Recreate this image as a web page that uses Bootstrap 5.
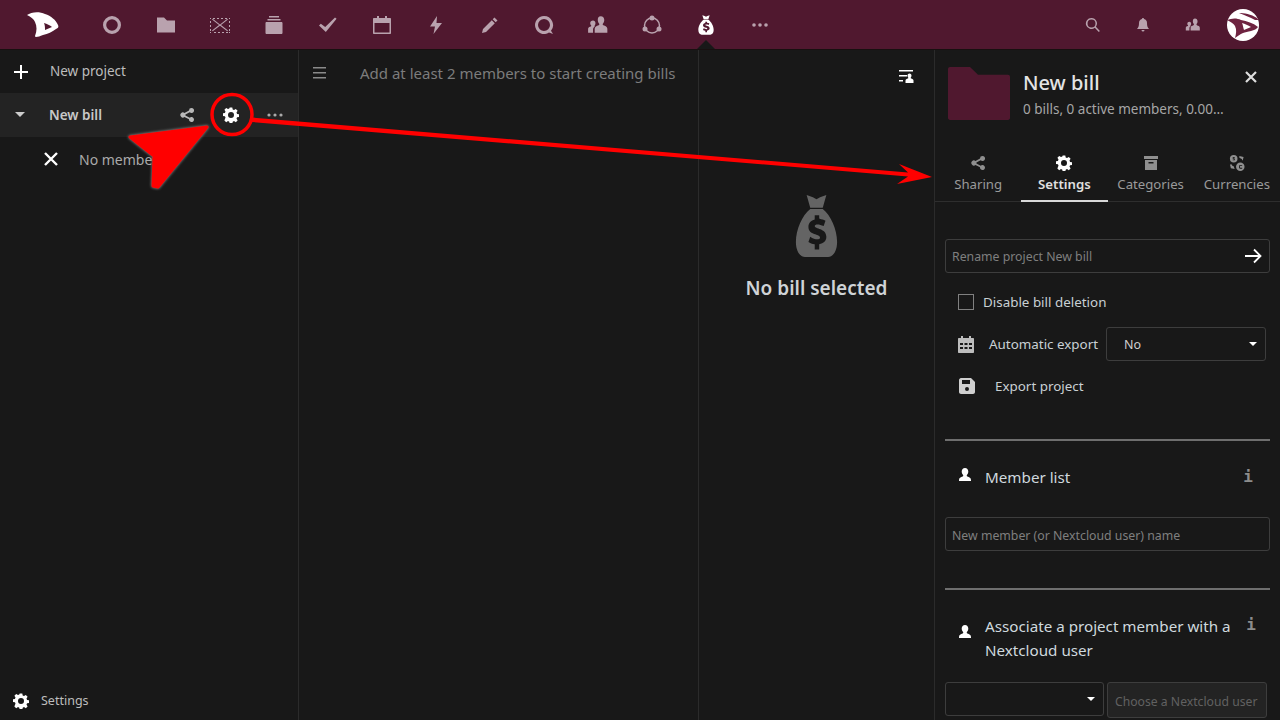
<!DOCTYPE html>
<html lang="en">
<head>
  <meta charset="UTF-8" />
  <title>Cospend - New bill</title>
  <link href="https://cdn.jsdelivr.net/npm/bootstrap@5.3.3/dist/css/bootstrap.min.css" rel="stylesheet">
  <style>
    html, body { height: 720px; overflow: hidden; }
    body { background: #181818; color: #d8d8d8; font-family: "Noto Sans", "Open Sans", sans-serif; font-size: 13px; }
    .topbar { height: 50px; background: #50182f; border-bottom: 1px solid #181010; }
    .app-logo { width: 85px; padding-left: 25px; }
    .top-item { width: 54px; height: 49px; position: relative; }
    .top-item svg { fill: #b9a2ae; }
    .top-item.on svg { fill: #fff; }
    .top-item.on::after { content: ""; position: absolute; left: 18px; bottom: 0; border: 9px solid transparent; border-top: 0; border-bottom-color: #181818; }
    .right-item { width: 50px; height: 49px; }
    .right-item svg { fill: #b9a2ae; }
    .avatar-round { width: 32px; height: 32px; border-radius: 50%; background: #fff; margin: 0 21px 0 9px; overflow: hidden; }
    .workspace { height: 670px; }
    .side-col { width: 299px; border-right: 1px solid #2b2b2b; }
    .side-row { height: 44px; }
    .new-row { height: 43px; padding-left: 14px; color: #bdbdbd; font-size: 13.5px; }
    .new-row span { margin-left: 22px; }
    .bill-row { background: #232323; font-weight: 600; font-size: 13.5px; color: #c8c8c8; padding-left: 15px; }
    .bill-row .bill-name { margin-left: 24px; width: 130px; }
    .gear-gap, .dots-gap { margin-left: 28px; }
    .member-row { padding-left: 44px; color: #aaa; font-size: 14px; }
    .member-row span { margin-left: 21px; }
    .side-foot { height: 38px; padding-left: 13px; color: #bdbdbd; font-size: 12.5px; }
    .side-foot span { margin-left: 12px; }
    .list-col { width: 400px; border-right: 1px solid #2b2b2b; }
    .list-head { height: 46px; padding-left: 14px; color: #7c7c7c; font-size: 15px; }
    .list-head span { margin-left: 34px; }
    .detail-col { width: 236px; border-right: 1px solid #2b2b2b; }
    .filter-btn { height: 56px; padding: 20px 20px 0 0; }
    .empty-box { margin-top: 88px; }
    .empty-box p { font-size: 19px; font-weight: 600; color: #cfd3d6; margin: 17px 0 0; line-height: 26px; }
    .panel-col { width: 345px; padding: 0 10px; overflow: hidden; }
    .panel-top { height: 96px; padding: 17px 0 0 3px; position: relative; }
    .panel-top h5 { font-size: 20px; font-weight: 500; color: #e4e4e4; margin: 4px 0 4px; }
    .panel-top p { font-size: 13.5px; color: #a6a6a6; margin: 0; white-space: nowrap; }
    .panel-close { position: absolute; right: 13px; top: 21px; }
    .title-gap { margin-left: 13px; }
    .tab-strip { margin: 0 -10px 37px; height: 56px; border-bottom: 1px solid #2e2e2e; }
    .tab-item { width: 86.5px; height: 56px; color: #9a9a9a; font-size: 13.2px; padding-top: 9px; line-height: 19px; }
    .tab-item svg { fill: #8f8f8f; display: block; margin: 0 auto 4px; }
    .tab-item.on { color: #e0e0e0; font-weight: 600; border-bottom: 2px solid #d8d8d8; }
    .tab-item.on svg { fill: #fff; }
    .field-box { height: 34px; border: 1px solid #3d3d3d; border-radius: 3px; background: transparent; font-size: 12.3px; color: #7f7f7f; padding: 0 6px; }
    .field-box.wide { width: 325px; }
    .field-box.wide.rename-box { padding-right: 7px; }
    .rename-box span { margin-top: 2px; }
    .field-box.wide.member-box { padding-top: 4px; }
    .opt-row { padding-left: 13px; font-size: 13.4px; color: #c9d0d4; height: 42px; }
    .tick-box { width: 16px; height: 16px; border: 1px solid #808080; margin-right: 9px; }
    .cal-ico { margin-right: 15px; }
    .export-ico { margin-left: 1px; margin-right: 20px; }
    .select-box { width: 160px; height: 34px; margin-left: 8px; border: 1px solid #3d3d3d; border-radius: 3px; padding: 2px 17px 0; font-size: 12.5px; color: #cfcfcf; position: relative; }
    .caret-down { position: absolute; right: 8px; top: 14px; border: 4px solid transparent; border-bottom: 0; border-top-color: #fff; }
    .rule-line { height: 2px; background: #6e6e6e; margin-top: 32px; }
    .rule-line.rule-two { margin-top: 37px; }
    .sect-title { font-size: 15.2px; color: #cfd9de; line-height: 24px; }
    .sect-one { height: 76px; padding: 0 17px 4px 12px; }
    .sect-one svg { margin-right: 12px; margin-bottom: 4px; }
    .info-mark { font-family: "DejaVu Sans Mono", monospace; font-weight: 700; font-size: 16px; color: #8c8c8c; }
    .sect-two { height: 92px; padding: 4px 14px 0 12px; }
    .sect-two svg { margin-right: 12px; margin-bottom: 12px; }
    .info-two { margin: 19px 0 0 8px; }
    .pick-one { width: 159px; position: relative; }
    .pick-two { width: 160px; height: 36px; margin-left: 3px; background: #232323; color: #616161; font-size: 12.2px; padding: 4px 7px 0; display: flex; align-items: center; white-space: nowrap; }
    .mark-layer { position: absolute; left: 0; top: 0; width: 1280px; height: 720px; pointer-events: none; }
    .fat-arrow { filter: drop-shadow(0 0 1.5px #999); }
  </style>
</head>
<body>

<svg width="0" height="0" class="position-absolute">
  <defs>
    <symbol id="gear" viewBox="0 0 16 16"><path fill-rule="evenodd" d="M6.700.5h2.600l.4 2 1.300.6 1.800-1.100 1.800 1.800-1.100 1.800.6 1.300 2 .4v2.600l-2 .4-.6 1.300 1.100 1.800-1.800 1.800-1.800-1.100-1.300.6-.4 2H6.700l-.4-2-1.300-.6-1.800 1.100-1.800-1.800L2.500 10.600l-.6-1.300-2-.4V6.300l2-.4.6-1.300L1.400 2.800l1.800-1.800L5 2.100l1.300-.6zM8 5a3 3 0 1 0 0 6 3 3 0 0 0 0-6z"/></symbol>
    <symbol id="share" viewBox="0 0 16 16"><path d="M12.500 1a2.500 2.500 0 1 1-1.800 4.200L6.400 7.400a2.500 2.500 0 0 1 0 1.200l4.300 2.200a2.500 2.500 0 1 1-.7 1.400L5.500 9.900a2.500 2.500 0 1 1 0-3.800L10 3.600A2.500 2.500 0 0 1 12.500 1z"/></symbol>
    <symbol id="person" viewBox="0 0 16 16"><path d="M8 1c2 0 3.300 1.500 3.300 3.600 0 1.400-.6 2.700-1.400 3.500-.3.500-.2 1.200.5 1.500 1.800.7 3.600 1.300 3.600 3.400V14H2v-1c0-2.100 1.800-2.700 3.600-3.400.7-.3.800-1 .5-1.500C5.300 7.300 4.700 6 4.700 4.600 4.700 2.500 6 1 8 1z"/></symbol>
    <symbol id="people" viewBox="0 0 20 20"><path d="M12.500 2c2 0 3.200 1.500 3.200 3.500 0 1.300-.5 2.500-1.300 3.300-.3.500-.1 1.100.5 1.400 1.700.6 3.600 1.200 3.600 3.300V17H7v-3.500c0-2.100 1.900-2.700 3.600-3.300.6-.3.800-.9.500-1.400-.8-.8-1.300-2-1.300-3.300C9.800 3.500 10.500 2 12.500 2zM5.500 6c1.200 0 2.200 1 2.200 2.500 0 .9-.4 1.700-.9 2.300-.2.400 0 .6.300.8-1.200.6-1.600 1.500-1.600 2.400V17H1v-3.500c0-1.500 1.300-1.900 2.500-2.200.4-.2.500-.6.300-.9-.6-.5-.9-1.200-.9-2C2.900 7 4 6 5.500 6z"/></symbol>
    <symbol id="bag" viewBox="0 0 48 60"><path fill-rule="evenodd" d="M13 1l7 2 4 2 4-2 7-2-4 12H17zM17 14h14c9 6 16 19 16 31 0 9-5 14-10 14H11C6 59 1 54 1 45c0-12 7-25 16-31zM22 20v4c-4 1-7 3-7 7 0 8 13 6 13 10 0 2-6 2-11-1l-2 5c2 1 4 2 7 2v5h5v-5c5-1 8-3 8-7 0-8-13-7-13-10 0-2 5-2 10 0l2-5c-2-1-4-1-7-2v-3z"/></symbol>
  </defs>
</svg>

<!-- top navigation -->
<header class="topbar d-flex align-items-center">
  <div class="app-logo">
    <svg width="34" height="28" viewBox="0 0 34 28" class="d-block"><path fill="#fff" fill-rule="evenodd" d="M2 4C6 1 14 0 20 3c6 2 11 6 13 11 1 2 0 3-2 4-4 3-8 5-13 6-3 1-5 2-7 2-1 0-1-1-1-1 2-5 2-10 0-14C9 8 6 6 2 4zM19 12c1 2 1 5 1 7l7-3c-2-2-5-3-8-4z"/></svg>
  </div>
  <div class="top-item d-flex align-items-center justify-content-center">
    <svg width="20" height="20" viewBox="0 0 20 20"><path fill-rule="evenodd" d="M10 1a9 9 0 1 1 0 18 9 9 0 0 1 0-18zm0 3.200a5.800 5.800 0 1 0 0 11.600 5.800 5.800 0 0 0 0-11.600z"/></svg>
  </div>
  <div class="top-item d-flex align-items-center justify-content-center">
    <svg width="20" height="20" viewBox="0 0 20 20"><path d="M1 2.500h7l3 3h8v12H1z"/></svg>
  </div>
  <div class="top-item d-flex align-items-center justify-content-center">
    <svg width="22" height="20" viewBox="0 0 22 20"><path d="M1 3h1v1H1zm3 0h2v1H4zm4 0h2v1H8zm4 0h2v1h-2zm4 0h2v1h-2zm4 0h1v1h-1zM1 6h1v2H1zm0 4h1v2H1zm0 4h1v2H1zm19-8h1v2h-1zm0 4h1v2h-1zm0 4h1v2h-1zM1 17h1v1H1zm4 0h2v1H5zm4 0h2v1H9zm4 0h2v1h-2zm4 0h2v1h-2zm3 0h1v1h-1z"/><path d="M3 4.500l.7-.7L11 9.500l7.300-5.700.7.7L12 10l7 5.500-.7.7L11 10.700l-7.300 5.500-.7-.7L10 10z"/></svg>
  </div>
  <div class="top-item d-flex align-items-center justify-content-center">
    <svg width="20" height="20" viewBox="0 0 20 20"><path d="M5 1h10v1.500H5zM3.500 4h13v1.500h-13zM2.500 7h15c.5 0 1 .5 1 1v10c0 .5-.5 1-1 1h-15c-.5 0-1-.5-1-1V8c0-.5.5-1 1-1z"/></svg>
  </div>
  <div class="top-item d-flex align-items-center justify-content-center">
    <svg width="20" height="20" viewBox="0 0 20 20"><path d="M7.800 17L1 10.500l1.800-1.700 4.400 3.200L17 2.500l1.600 1.300z"/></svg>
  </div>
  <div class="top-item d-flex align-items-center justify-content-center">
    <svg width="20" height="20" viewBox="0 0 20 20"><path fill-rule="evenodd" d="M5 1h2v2h6V1h2v2h3c.6 0 1 .4 1 1v14c0 .6-.4 1-1 1H2c-.6 0-1-.4-1-1V4c0-.6.4-1 1-1h3zM2.500 8v9.500h15V8z"/></svg>
  </div>
  <div class="top-item d-flex align-items-center justify-content-center">
    <svg width="20" height="20" viewBox="0 0 20 20"><path d="M11 1L4 11.500h5L7.500 19 16 8h-5.500z"/></svg>
  </div>
  <div class="top-item d-flex align-items-center justify-content-center">
    <svg width="20" height="20" viewBox="0 0 20 20"><path d="M14.500 2.500l3 3-1.800 1.800-3-3zM11.800 5.200l3 3L6 17l-4 1 1-4z"/></svg>
  </div>
  <div class="top-item d-flex align-items-center justify-content-center">
    <svg width="20" height="20" viewBox="0 0 20 20"><path fill-rule="evenodd" d="M10 1a9 9 0 0 1 7 14.700l2 3.300-4-1.500A9 9 0 1 1 10 1zm0 3a6 6 0 1 0 0 12 6 6 0 0 0 0-12z"/></svg>
  </div>
  <div class="top-item d-flex align-items-center justify-content-center">
    <svg width="22" height="22" viewBox="0 0 20 20"><use href="#people"/></svg>
  </div>
  <div class="top-item d-flex align-items-center justify-content-center">
    <svg width="20" height="20" viewBox="0 0 20 20"><circle cx="10" cy="10.500" r="7.500" style="fill:none;stroke:#b9a2ae;stroke-width:1.500"/><circle cx="10" cy="3" r="2.500"/><circle cx="3" cy="14" r="2.500"/><circle cx="17" cy="14" r="2.500"/></svg>
  </div>
  <div class="top-item on d-flex align-items-center justify-content-center">
    <svg width="16" height="20" viewBox="0 0 48 60"><use href="#bag"/></svg>
  </div>
  <div class="top-item d-flex align-items-center justify-content-center">
    <svg width="16" height="4" viewBox="0 0 16 4"><circle cx="2" cy="2" r="1.800"/><circle cx="8" cy="2" r="1.800"/><circle cx="14" cy="2" r="1.800"/></svg>
  </div>
  <div class="ms-auto d-flex align-items-center">
    <div class="right-item d-flex align-items-center justify-content-center">
      <svg width="16" height="16" viewBox="0 0 16 16"><path fill-rule="evenodd" d="M6.500 1a5.500 5.500 0 0 1 4.400 8.700l4 4.200-1.100 1.100-4-4.200A5.500 5.500 0 1 1 6.500 1zm0 1.500a4 4 0 1 0 0 8 4 4 0 0 0 0-8z"/></svg>
    </div>
    <div class="right-item d-flex align-items-center justify-content-center">
      <svg width="14" height="14" viewBox="0 0 14 14"><path d="M7 0c.7 0 1 .5 1 1 2 .5 3 2 3 4 0 3 .5 4.500 2 6H1c1.500-1.500 2-3 2-6 0-2 1-3.500 3-4 0-.5.300-1 1-1zM5.500 12h3a1.500 1.500 0 0 1-3 0z"/></svg>
    </div>
    <div class="right-item d-flex align-items-center justify-content-center">
      <svg width="16" height="16" viewBox="0 0 20 20"><use href="#people"/></svg>
    </div>
    <div class="avatar-round">
      <svg width="32" height="32" viewBox="0 0 32 32" class="d-block"><path fill="#6e2340" fill-rule="evenodd" d="M0 11c5-2 10-2 14 0 6 1 12 3 17 7-1 2-4 3-7 4-3 1-6 1-8 2-3 1-5 3-8 5 1-4 2-8 0-12-1-2-4-4-8-6zM15 14c1 2 1 4 2 7 2-1 5-2 7-3-3-2-6-3-9-4zM12 4c5 0 12 1 18 5l2 2-4 0C23 8 17 6 12 4z"/></svg>
    </div>
  </div>
</header>

<div class="workspace d-flex">
  <!-- project list -->
  <aside class="side-col d-flex flex-column">
    <div class="side-row new-row d-flex align-items-center">
      <svg width="14" height="14" viewBox="0 0 14 14" fill="#fff"><path d="M6 0h2v6h6v2H8v6H6V8H0V6h6z"/></svg>
      <span>New project</span>
    </div>
    <div class="side-row bill-row d-flex align-items-center">
      <svg width="10" height="6" viewBox="0 0 10 6" fill="#ccc"><path d="M0 0h10L5 5z"/></svg>
      <span class="bill-name">New bill</span>
      <svg width="16" height="16" fill="#b8b8b8"><use href="#share"/></svg>
      <svg width="16" height="16" fill="#fff" class="gear-gap"><use href="#gear"/></svg>
      <svg width="16" height="4" viewBox="0 0 16 4" fill="#aaa" class="dots-gap"><circle cx="2" cy="2" r="1.600"/><circle cx="8" cy="2" r="1.600"/><circle cx="14" cy="2" r="1.600"/></svg>
    </div>
    <div class="side-row member-row d-flex align-items-center">
      <svg width="14" height="14" viewBox="0 0 14 14" fill="none" stroke="#fff" stroke-width="2.400"><path d="M1 1l12 12M13 1L1 13"/></svg>
      <span>No member</span>
    </div>
    <div class="side-foot mt-auto d-flex align-items-center">
      <svg width="16" height="16" fill="#fff"><use href="#gear"/></svg>
      <span>Settings</span>
    </div>
  </aside>

  <!-- bill list -->
  <section class="list-col">
    <div class="list-head d-flex align-items-center">
      <svg width="13" height="12" viewBox="0 0 13 12" fill="#8a8a8a"><path d="M0 0h13v1.600H0zM0 5h13v1.600H0zM0 10h13v1.600H0z"/></svg>
      <span>Add at least 2 members to start creating bills</span>
    </div>
  </section>

  <!-- bill detail -->
  <section class="detail-col">
    <div class="filter-btn d-flex justify-content-end align-items-start">
      <svg width="15" height="14" viewBox="0 0 15 14" fill="#fff"><path d="M0 0h14v1.600H0zM0 5h8v1.500H0zM0 10h4v1.500H0zM10.500 3.500c1.300 0 2 1 2 2.200 0 .8-.4 1.500-.8 2-.1.400.1.700.5.800 1 .4 2.300.7 2.300 2V13H6.500v-2.500c0-1.300 1.300-1.600 2.300-2 .4-.1.600-.4.500-.8-.4-.5-.8-1.200-.8-2 0-1.200.7-2.200 2-2.200z"/></svg>
    </div>
    <div class="empty-box text-center">
      <svg width="43" height="64" viewBox="0 0 48 60" preserveAspectRatio="none" fill="#646464" class="d-block mx-auto"><use href="#bag"/></svg>
      <p>No bill selected</p>
    </div>
  </section>

  <!-- sidebar with settings -->
  <section class="panel-col">
    <div class="panel-top d-flex">
      <svg width="62" height="53" viewBox="0 0 62 54" preserveAspectRatio="none" fill="#50182f" class="flex-shrink-0"><path d="M2 0h20l8 8h30c1 0 2 1 2 2v42c0 1-1 2-2 2H2c-1 0-2-1-2-2V2c0-1 1-2 2-2z"/></svg>
      <div class="title-gap">
        <h5>New bill</h5>
        <p>0 bills, 0 active members, 0.00…</p>
      </div>
      <svg class="panel-close" width="12" height="12" viewBox="0 0 12 12" fill="none" stroke="#ddd" stroke-width="2.200"><path d="M1 1l10 10M11 1L1 11"/></svg>
    </div>
    <div class="tab-strip d-flex">
      <div class="tab-item text-center">
        <svg width="16" height="16"><use href="#share"/></svg>Sharing
      </div>
      <div class="tab-item on text-center">
        <svg width="16" height="16"><use href="#gear"/></svg>Settings
      </div>
      <div class="tab-item text-center">
        <svg width="16" height="16" viewBox="0 0 16 16"><path fill-rule="evenodd" d="M1 1h14v3H1zM2 5h12v10H2zM5.500 7v1.500h5V7z"/></svg>Categories
      </div>
      <div class="tab-item text-center">
        <svg width="16" height="16" viewBox="0 0 17 17"><circle cx="5" cy="4" r="4"/><circle cx="12" cy="12.500" r="4.500"/><path d="M11 1l4.500 1-1 4-.9-1.800L11 3zM1 10h2l.5 1.500L5 12l1 3-4-1z"/><path d="M4 2h2.200v.8H4.800v.8h1.400v2H4v-.8h1.400v-.6H4zM14 10.500h-2.500l-.8 1v2l.8 1H14v-.9h-2l-.4-.6v-1l.4-.6h2z" style="fill:#181818"/></svg>Currencies
      </div>
    </div>

    <div class="field-box wide rename-box d-flex align-items-center justify-content-between">
      <span>Rename project New bill</span>
      <svg width="17" height="16" viewBox="0 0 17 16" fill="none" stroke="#fff" stroke-width="1.800"><path d="M0 8h15M9 1.500L15.500 8 9 14.500"/></svg>
    </div>
    <div class="opt-row d-flex align-items-center mt-2">
      <span class="tick-box"></span>Disable bill deletion
    </div>
    <div class="opt-row d-flex align-items-center">
      <svg width="16" height="17" viewBox="0 0 16 17" fill="#bdbdbd" class="cal-ico"><path fill-rule="evenodd" d="M3 0h2v2h6V0h2v2h2c.6 0 1 .4 1 1v13c0 .6-.4 1-1 1H1c-.6 0-1-.4-1-1V3c0-.6.4-1 1-1h2zM2 7v2h3V7zm4.500 0v2h3V7zM11 7v2h3V7zM2 11v2h3v-2zm4.500 0v2h3v-2zM11 11v2h3v-2z"/></svg>
      <span>Automatic export</span>
      <div class="select-box d-flex align-items-center">No<span class="caret-down"></span></div>
    </div>
    <div class="opt-row d-flex align-items-center">
      <svg width="16" height="16" viewBox="0 0 16 16" fill="#cfcfcf" class="export-ico"><path fill-rule="evenodd" d="M2 0h10l4 4v10c0 1-1 2-2 2H2c-1 0-2-1-2-2V2C0 1 1 0 2 0zm1 2v4h8V2zm5 7a2 2 0 1 0 0 4 2 2 0 0 0 0-4z"/></svg>
      <span>Export project</span>
    </div>

    <div class="rule-line"></div>
    <div class="sect-one d-flex align-items-center">
      <svg width="16" height="16" fill="#fff"><use href="#person"/></svg>
      <span class="sect-title">Member list</span>
      <span class="info-mark ms-auto">i</span>
    </div>
    <div class="field-box wide member-box d-flex align-items-center">New member (or Nextcloud user) name</div>
    <div class="rule-line rule-two"></div>
    <div class="sect-two d-flex align-items-center">
      <svg width="16" height="16" fill="#fff" class="flex-shrink-0"><use href="#person"/></svg>
      <span class="sect-title">Associate a project member with a Nextcloud user</span>
      <span class="info-mark align-self-start info-two">i</span>
    </div>
    <div class="d-flex align-items-start">
      <div class="field-box pick-one"><span class="caret-down"></span></div>
      <div class="field-box pick-two">Choose a Nextcloud user</div>
    </div>
  </section>
</div>

<!-- annotation drawn over the page -->
<svg class="mark-layer" viewBox="0 0 1280 720">
  <circle cx="232" cy="114.500" r="20" fill="none" stroke="#f00" stroke-width="3.500"/>
  <path d="M252 117.500L908 172.500 899 164 932 177 897 184 908 176.500 252 122z" fill="#f00"/>
  <path class="fat-arrow" d="M207 127L130 137 154 156 153 186 158 187z" fill="#f00" stroke="#f00" stroke-width="3" stroke-linejoin="round"/>
</svg>

<script src="https://cdn.jsdelivr.net/npm/bootstrap@5.3.3/dist/js/bootstrap.bundle.min.js"></script>
</body>
</html>
